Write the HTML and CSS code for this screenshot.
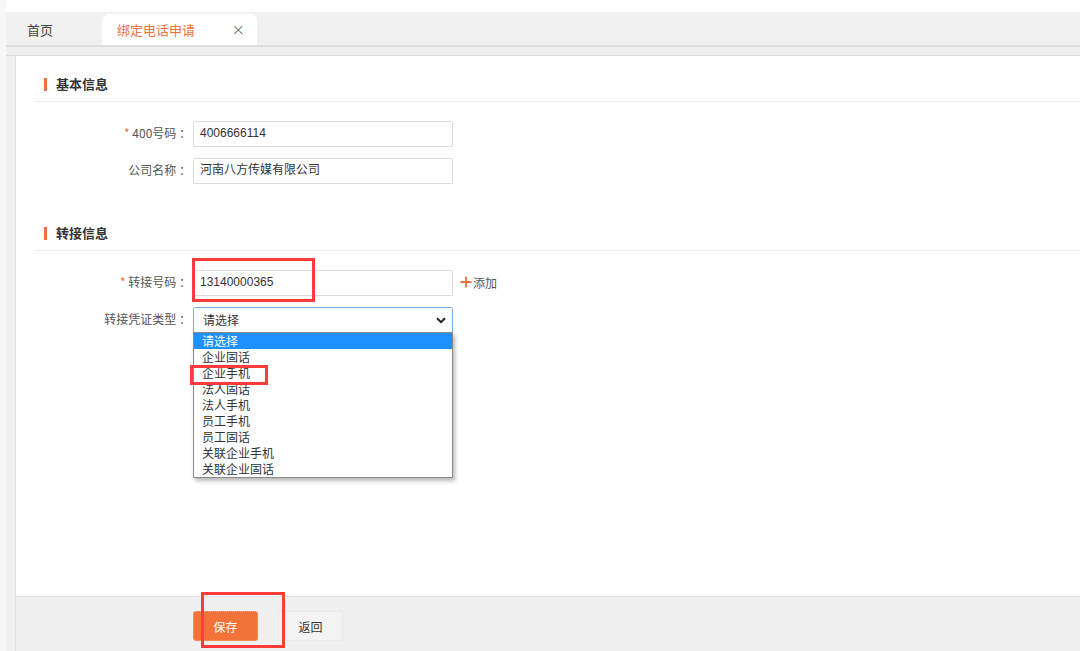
FILE: index.html
```html
<!DOCTYPE html>
<html lang="zh-CN">
<head>
<meta charset="utf-8">
<title>绑定电话申请</title>
<link rel="stylesheet" href="styles.css">
</head>
<body>
<div class="page">
  <div class="edge"></div>
  <div class="main">
    <div class="topgap"></div>
    <div class="tabbar">
      <div class="tab">首页</div>
      <div class="tab active"><span>绑定电话申请</span><span class="close">×</span></div>
    </div>
    <div class="strip"></div>
    <div class="body">
      <div class="gutter"></div>
      <div class="content">
        <div class="panel">
          <div class="section-title">基本信息</div>
          <div class="form first">
            <div class="row">
              <label class="label"><span class="req">*</span> 400号码 ：</label>
              <div class="input">4006666114</div>
            </div>
            <div class="row">
              <label class="label">公司名称 ：</label>
              <div class="input">河南八方传媒有限公司</div>
            </div>
          </div>

          <div class="section-title second">转接信息</div>
          <div class="form first">
            <div class="row">
              <label class="label"><span class="req">*</span> 转接号码 ：</label>
              <div class="input">13140000365</div>
              <div class="add">
                <svg width="12" height="12" viewBox="0 0 12 12"><path d="M6 0.5v11M0.5 6h11" stroke="#f0703a" stroke-width="1.8"/></svg>
                <span>添加</span>
              </div>
              <div class="mark mark-phone"></div>
            </div>
            <div class="row">
              <label class="label">转接凭证类型 ：</label>
              <div class="select">
                <span>请选择</span>
                <svg class="chev" width="10" height="7" viewBox="0 0 10 7"><path d="M1 1.2l4 4 4-4" fill="none" stroke="#222" stroke-width="2"/></svg>
                <ul class="dropdown">
                  <li class="hl">请选择</li>
                  <li>企业固话</li>
                  <li>企业手机</li>
                  <li>法人固话</li>
                  <li>法人手机</li>
                  <li>员工手机</li>
                  <li>员工固话</li>
                  <li>关联企业手机</li>
                  <li>关联企业固话</li>
                </ul>
                <div class="mark mark-option"></div>
              </div>
            </div>
          </div>
        </div>
        <div class="footer">
          <button class="btn primary">保存</button>
          <button class="btn plain">返回</button>
          <div class="mark mark-save"></div>
        </div>
      </div>
    </div>
  </div>
</div>
</body>
</html>
```

FILE: styles.css
```css
* { box-sizing: border-box; }
html, body { margin: 0; padding: 0; }
body {
  font-family: "Liberation Sans", "Noto Sans CJK SC", sans-serif;
  font-size: 12px;
  color: #333;
  background: #fff;
}
.page {
  display: flex;
  width: 1080px;
  height: 651px;
  overflow: hidden;
}
.edge {
  width: 6px;
  flex: none;
  background: #f6f8f8;
}
.main {
  flex: 1;
  display: flex;
  flex-direction: column;
  min-width: 0;
}
.topgap { height: 12px; background: #fff; flex: none; }
.tabbar {
  height: 35px;
  flex: none;
  background: #f1f1f1;
  border-bottom: 2px solid #dedede;
  display: flex;
  align-items: flex-end;
}
.tab {
  height: 31px;
  display: flex;
  align-items: center;
  font-family: "Noto Sans CJK SC", sans-serif;
  font-size: 13px;
  color: #444;
}
.tab:first-child {
  width: 96px;
  padding-left: 21px;
}
.tab.active {
  width: 155px;
  background: #fff;
  border-radius: 7px 7px 0 0;
  color: #f0703a;
  padding-left: 15px;
  padding-right: 12px;
  justify-content: space-between;
}
.tab .close {
  color: #666;
  font-size: 16px;
  font-family: "DejaVu Sans", sans-serif;
  font-weight: 300;
}
.strip {
  height: 9px;
  flex: none;
  background: #efefef;
  border-bottom: 1px solid #dcdcdc;
}
.body {
  flex: 1;
  display: flex;
  min-height: 0;
}
.gutter {
  width: 10px;
  flex: none;
  background: #f0f0f0;
  border-right: 1px solid #e2e2e2;
}
.content {
  flex: 1;
  display: flex;
  flex-direction: column;
}
.panel {
  flex: 1;
  background: #fff;
  padding-top: 20px;
}
.section-title {
  margin-left: 18px;
  padding: 0 0 9px 10px;
  line-height: 16px;
  border-bottom: 1px solid #ececec;
  font-family: "Noto Sans CJK SC", sans-serif;
  font-size: 13px;
  font-weight: 700;
  color: #333;
  display: flex;
  align-items: center;
}
.section-title::before {
  content: "";
  width: 3px;
  height: 13px;
  background: #f0703a;
  margin-right: 9px;
}
.section-title.second { margin-top: 41px; }
.form {
  display: flex;
  flex-direction: column;
  gap: 11px;
}
.form.first { margin-top: 19px; }
.row {
  display: flex;
  align-items: center;
  height: 26px;
  position: relative;
}
.label {
  width: 175px;
  margin-right: 2px;
  text-align: right;
  font-family: "Noto Sans CJK SC", sans-serif;
  font-size: 12px;
  color: #555;
  white-space: nowrap;
  line-height: 16px;
  margin-top: -2px;
}
.req { color: #f0703a; }
.input {
  width: 260px;
  height: 26px;
  border: 1px solid #dcdcdc;
  border-radius: 2px;
  padding-left: 6px;
  line-height: 22px;
  font-family: "Liberation Sans", "Noto Sans CJK SC", sans-serif;
  font-size: 12px;
  color: #333;
}
.add {
  display: flex;
  align-items: center;
  margin-left: 7px;
  gap: 1px;
  font-family: "Noto Sans CJK SC", sans-serif;
  color: #555;
  margin-top: -2px;
}
.select {
  position: relative;
  width: 260px;
  height: 26px;
  border: 1px solid #7eaee6;
  border-radius: 2px;
  padding-left: 9px;
  display: flex;
  align-items: center;
  justify-content: space-between;
  padding-right: 6px;
  font-family: "Noto Sans CJK SC", sans-serif;
  font-size: 12px;
  color: #333;
}
.select > span { margin-top: -2px; }
.dropdown {
  position: absolute;
  left: -1px;
  top: 24px;
  width: 260px;
  margin: 0;
  padding: 0;
  list-style: none;
  background: #fff;
  border: 1px solid #8a8a8a;
  box-shadow: 2px 3px 4px rgba(0,0,0,0.28);
  z-index: 5;
}
.dropdown li {
  height: 16px;
  line-height: 15px;
  padding-left: 8px;
  font-family: "Noto Sans CJK SC", sans-serif;
  font-size: 12px;
  color: #333;
}
.dropdown li.hl {
  background: #1e90ff;
  color: #fff;
}
.footer {
  height: 55px;
  flex: none;
  background: #f0f0f0;
  border-top: 1px solid #e3e3e3;
  display: flex;
  align-items: flex-start;
  padding: 14px 0 0 177px;
  gap: 20px;
  position: relative;
}
.btn {
  width: 65px;
  height: 30px;
  border-radius: 3px;
  font-family: "Noto Sans CJK SC", sans-serif;
  font-size: 12px;
  padding: 0;
}
.btn.primary {
  background: #f37238;
  border: 1px dotted #f7a47e;
  color: #fff;
}
.btn.plain {
  background: #f3f3f3;
  border: 1px dotted #e2e2e2;
  color: #333;
}
.mark {
  position: absolute;
  border: 3px solid #ff3b3b;
  z-index: 10;
  pointer-events: none;
}
.mark-phone {
  left: 176px;
  top: -12px;
  width: 123px;
  height: 44px;
}
.mark-option {
  left: -4px;
  top: 57px;
  width: 78px;
  height: 20px;
}
.mark-save {
  left: 185px;
  top: -5px;
  width: 84px;
  height: 56px;
}
```
